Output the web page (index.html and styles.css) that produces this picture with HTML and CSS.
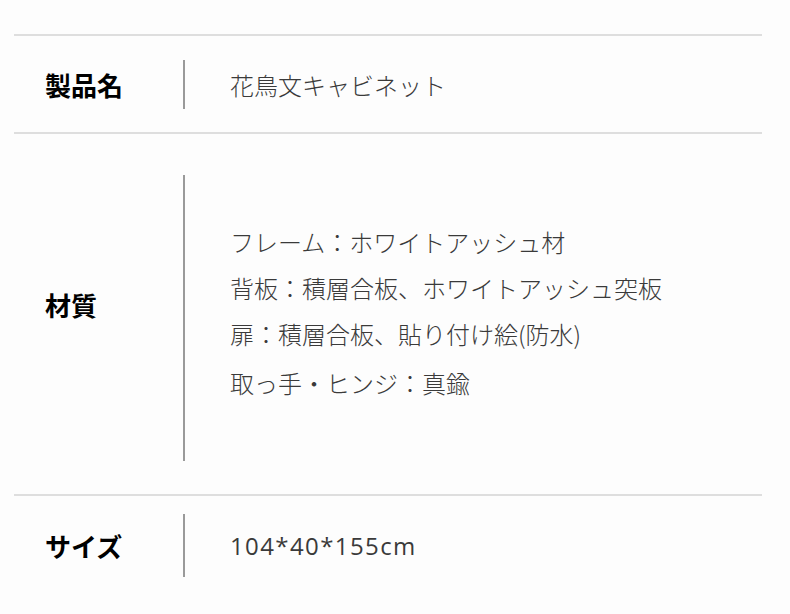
FILE: index.html
```html
<!DOCTYPE html>
<html lang="ja">
<head>
<meta charset="utf-8">
<title>製品仕様</title>
<link rel="stylesheet" href="styles.css">
</head>
<body>
<div class="spec">
  <div class="row row-name">
    <div class="label">製品名</div>
    <div class="value">花鳥文キャビネット</div>
  </div>
  <div class="row row-material">
    <div class="label">材質</div>
    <div class="value">
      <p class="line">フレーム：ホワイトアッシュ材</p>
      <p class="line">背板：積層合板、ホワイトアッシュ突板</p>
      <p class="line">扉：積層合板、貼り付け絵(防水)</p>
      <p class="line line-last">取っ手・ヒンジ：真鍮</p>
    </div>
  </div>
  <div class="row row-size">
    <div class="label">サイズ</div>
    <div class="value"><span class="latin">104*40*155cm</span></div>
  </div>
</div>
</body>
</html>
```

FILE: styles.css
```css
html, body {
  margin: 0;
  padding: 0;
  background: #fdfdfd;
}

body {
  font-family: "Noto Sans CJK JP", "Noto Sans", sans-serif;
  color: #3a3a3a;
}

.spec {
  margin: 0 28px 0 14px;
  padding-top: 34px;
}

.row {
  display: flex;
  align-items: center;
  border-top: 2px solid #dedede;
}

.label {
  width: 138px;
  padding-left: 31px;
  flex-shrink: 0;
  font-size: 26px;
  font-weight: 700;
  color: #000;
  line-height: 34px;
}

.value {
  border-left: 2px solid #9a9a9a;
  padding-left: 45px;
  font-size: 24px;
  font-weight: 300;
  line-height: 34px;
  display: flex;
  flex-direction: column;
  justify-content: center;
  align-self: stretch;
}

.row-name {
  padding: 24px 0 23px;
}

.row-name .value {
  min-height: 49px;
}

.row-material {
  padding: 41px 0 33px;
}

.row-material .label {
  margin-bottom: 26px;
}

.row-material .value {
  justify-content: flex-start;
  padding-top: 44px;
  padding-bottom: 55px;
}

.line {
  margin: 0;
  line-height: 46px;
}

.line-last {
  margin-top: 3px;
}

.row-size {
  padding: 18px 0 0;
}

.row-size .value {
  min-height: 63px;
}

.latin {
  font-family: "Open Sans", "Liberation Sans", sans-serif;
  font-weight: 400;
  font-size: 24px;
  letter-spacing: 1.4px;
  color: #3a3a3a;
}
```
